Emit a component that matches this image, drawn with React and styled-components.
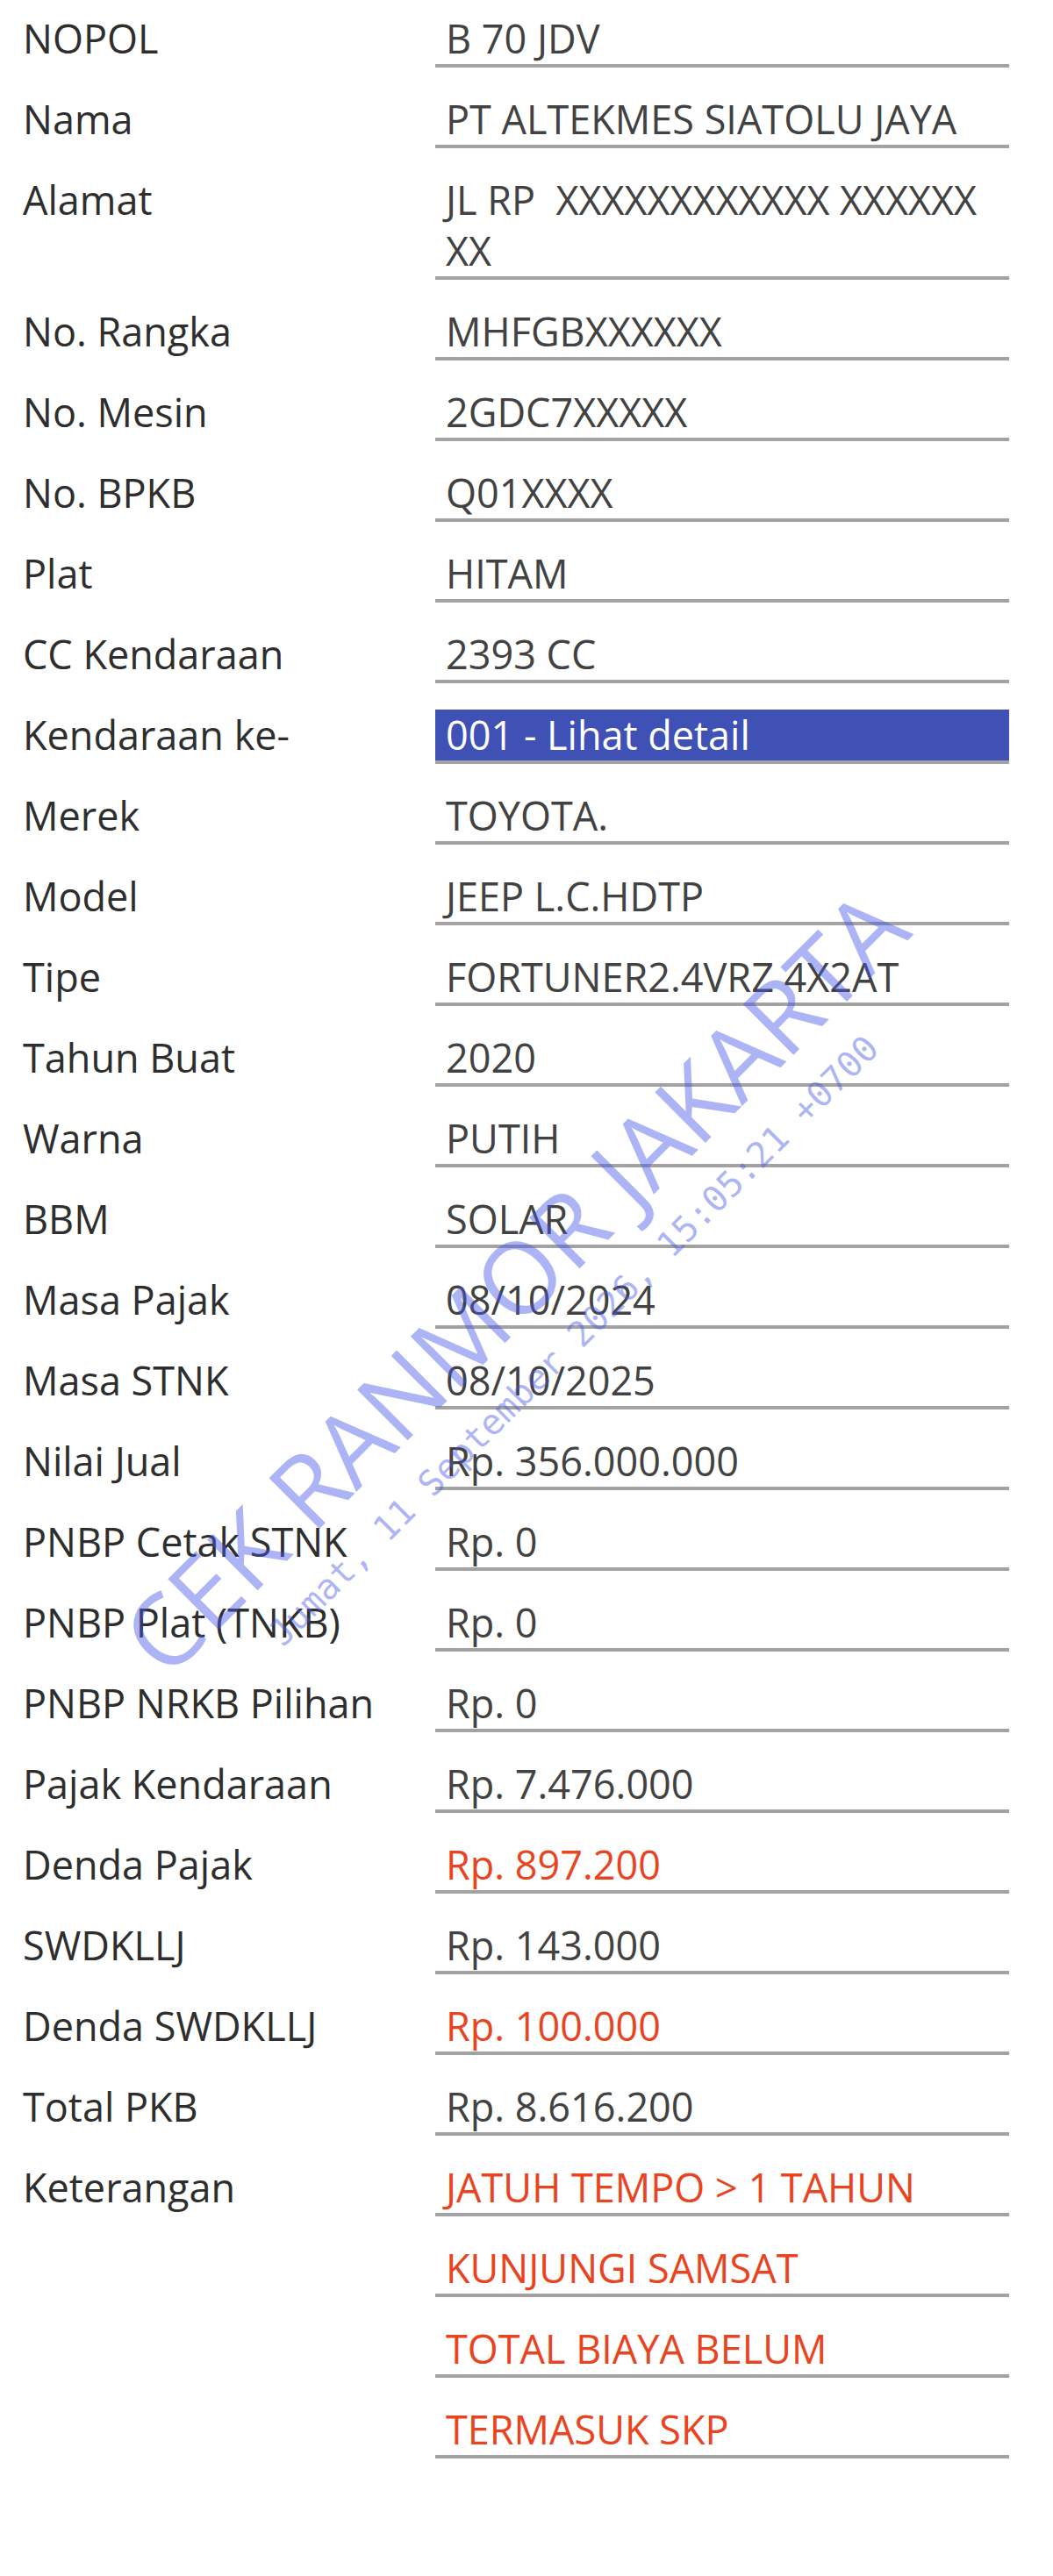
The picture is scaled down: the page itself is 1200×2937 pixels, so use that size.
import React from "react";
import styled, { createGlobalStyle } from "styled-components";

const GlobalStyle = createGlobalStyle`
  html, body {
    margin: 0;
    padding: 0;
    background: #ffffff;
  }
  body {
    font-family: "Open Sans", "Noto Sans", sans-serif;
  }
`;

const rows = [
  { label: "NOPOL", values: ["B 70 JDV"] },
  { label: "Nama", values: ["PT ALTEKMES SIATOLU JAYA"] },
  { label: "Alamat", values: ["JL RP\u00a0 XXXXXXXXXXXX XXXXXX XX"] },
  { label: "No. Rangka", values: ["MHFGBXXXXXX"] },
  { label: "No. Mesin", values: ["2GDC7XXXXX"] },
  { label: "No. BPKB", values: ["Q01XXXX"] },
  { label: "Plat", values: ["HITAM"] },
  { label: "CC Kendaraan", values: ["2393 CC"] },
  { label: "Kendaraan ke-", values: ["001 - Lihat detail"], tone: "link" },
  { label: "Merek", values: ["TOYOTA."] },
  { label: "Model", values: ["JEEP L.C.HDTP"] },
  { label: "Tipe", values: ["FORTUNER2.4VRZ 4X2AT"] },
  { label: "Tahun Buat", values: ["2020"] },
  { label: "Warna", values: ["PUTIH"] },
  { label: "BBM", values: ["SOLAR"] },
  { label: "Masa Pajak", values: ["08/10/2024"] },
  { label: "Masa STNK", values: ["08/10/2025"] },
  { label: "Nilai Jual", values: ["Rp. 356.000.000"] },
  { label: "PNBP Cetak STNK", values: ["Rp. 0"] },
  { label: "PNBP Plat (TNKB)", values: ["Rp. 0"] },
  { label: "PNBP NRKB Pilihan", values: ["Rp. 0"] },
  { label: "Pajak Kendaraan", values: ["Rp. 7.476.000"] },
  { label: "Denda Pajak", values: ["Rp. 897.200"], tone: "alert" },
  { label: "SWDKLLJ", values: ["Rp. 143.000"] },
  { label: "Denda SWDKLLJ", values: ["Rp. 100.000"], tone: "alert" },
  { label: "Total PKB", values: ["Rp. 8.616.200"] },
  {
    label: "Keterangan",
    values: [
      "JATUH TEMPO > 1 TAHUN",
      "KUNJUNGI SAMSAT",
      "TOTAL BIAYA BELUM",
      "TERMASUK SKP",
    ],
    tone: "alert",
  },
];

const toneColor = {
  plain: "#424242",
  alert: "#e8441f",
  link: "#ffffff",
};

const App = () => {
  return (
    <>
      <GlobalStyle />
      <Sheet>
        {rows.map((row) => (
          <Row key={row.label}>
            <Label>{row.label}</Label>
            <ValueStack>
              {row.values.map((value) => (
                <Value key={value} $tone={row.tone || "plain"}>
                  {value}
                </Value>
              ))}
            </ValueStack>
          </Row>
        ))}
        <Watermark>
          <WatermarkTitle>CEK RANMOR JAKARTA</WatermarkTitle>
          <WatermarkStamp>Jumat, 11 September 2026, 15:05:21 +0700</WatermarkStamp>
        </Watermark>
      </Sheet>
    </>
  );
};

const Sheet = styled.main`
  position: relative;
  box-sizing: border-box;
  width: 1200px;
  min-height: 2937px;
  padding: 15px 50px 0 26px;
  display: flex;
  flex-direction: column;
  gap: 30px;
  overflow: hidden;
`;

const Row = styled.div`
  display: grid;
  grid-template-columns: 470px 654px;
  align-items: start;
`;

const Label = styled.div`
  font-size: 45px;
  line-height: 58px;
  color: #2e2e2e;
  white-space: nowrap;
`;

const ValueStack = styled.div`
  display: flex;
  flex-direction: column;
  gap: 30px;
`;

const Value = styled.div`
  padding-left: 12px;
  font-size: 45px;
  line-height: 58px;
  color: ${(p) => toneColor[p.$tone]};
  background: ${(p) => (p.$tone === "link" ? "#3f51b5" : "transparent")};
  border-bottom: 4px solid #a2a2a2;
`;

const Watermark = styled.div`
  position: absolute;
  left: 606px;
  top: 1481px;
  transform: translate(-50%, -50%) rotate(-45deg);
  display: flex;
  flex-direction: column;
  align-items: center;
  gap: 20px;
  white-space: nowrap;
  pointer-events: none;
  color: rgba(72, 88, 232, 0.45);
`;

const WatermarkTitle = styled.div`
  font-family: "Open Sans", sans-serif;
  font-size: 114px;
  line-height: 1;
`;

const WatermarkStamp = styled.div`
  font-family: "DejaVu Sans Mono", monospace;
  font-size: 40px;
  line-height: 1;
`;

export default App;
